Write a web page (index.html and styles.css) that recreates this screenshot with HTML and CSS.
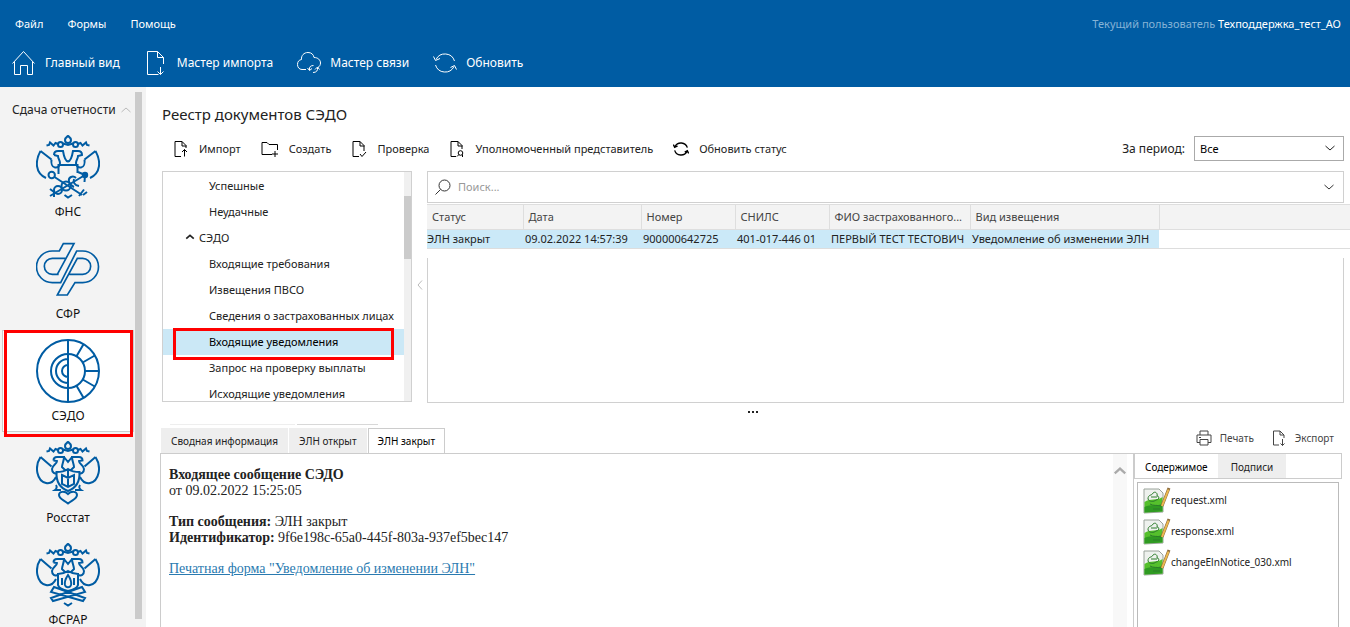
FILE: index.html
```html
<!DOCTYPE html>
<html lang="ru">
<head>
  <meta charset="UTF-8" />
  <meta name="viewport" content="width=device-width, initial-scale=1" />
  <title>Реестр документов СЭДО</title>
  <link rel="stylesheet" href="styles.css">
</head>
<body>
  <!-- Shared icon shapes -->
  <svg class="defs" width="0" height="0" aria-hidden="true">
    <symbol id="i-refresh" viewBox="0 0 24 24">
      <path d="M3 8.500A10 10 0 0 1 21.500 10M21 15.500A10 10 0 0 1 2.500 14M0.500 5.500L2.500 9.500L7 7.500M17.500 16.500L21.500 14.500L23.500 18.500" />
    </symbol>
    <symbol id="i-down" viewBox="0 0 12 12">
      <path d="M1.500 4L6 8L10.500 4" />
    </symbol>
    <symbol id="i-eagle" viewBox="0 0 64 64">
      <path d="M32 0.800C30.500 2 29 3 29 5A3 3 0 0 0 35 5C35 3 33.500 2 32 0.800Z" />
      <circle cx="24.500" cy="9.500" r="2.500" />
      <circle cx="39.500" cy="9.500" r="2.500" />
      <path d="M27 8.500L32 10L37 8.500M22 9L19.500 8L17.500 10.500L14 7.500L13 10L10.500 10.500M42 9L44.500 8L46.500 10.500L50 7.500L51 10L53.500 10.500" />
    </symbol>
    <symbol id="i-heads" viewBox="0 0 64 64">
      <path d="M4.500 16L15.500 25.500M4.500 16C-2 26 1 40 10 42C15 43 18 40 20 36M59.500 16L48.500 25.500M59.500 16C66 26 63 40 54 42C49 43 46 40 44 36" />
      <path d="M17.500 19.500C17.500 17 19 16 21 16H28C28 20 26 23 26 26L29 29H35L38 26C38 23 36 20 36 16H43C45 16 46.500 17 46.500 19.500L43 20C43 23 48 24 48 28C48 32 45 33 43 32M17.500 19.500L21 20C21 23 16 24 16 28C16 32 19 33 21 32M28 16L32 21L36 16" />
    </symbol>
    <symbol id="i-xml" viewBox="0 0 28 28">
      <path d="M1 3H16L20 7V26L1 27Z" fill="#eef1ee" stroke="#9aa39a" />
      <path d="M1.500 16C7 12 14 15 19.500 11V25.500L1.500 26.500Z" fill="#55c02c" />
      <path d="M1.500 21C8 18 14 20 19.500 18V25.500L1.500 26.500Z" fill="#2f9a22" />
      <path d="M5 13C5 8 9 10 10 7C12 5 15 7 14 10C17 10 16 14 13 14C11 16 6 16 5 13ZM8 11H14M7 18C10 20 15 19 18 20M10 23H17" fill="none" stroke="#2c7d2a" />
      <path d="M19 20L26 2" stroke="#8b6a3c" stroke-width="3" />
      <path d="M19 20L25.500 3.500" stroke="#edb94f" stroke-width="2" />
    </symbol>
  </svg>

  <header class="header">
    <div class="menu-row">
      <nav class="menu">
        <button type="button">Файл</button>
        <button type="button">Формы</button>
        <button type="button">Помощь</button>
      </nav>
      <div class="user"><span>Текущий пользователь</span> Техподдержка_тест_АО</div>
    </div>
    <div class="main-tools">
      <button type="button">
        <svg class="icon" viewBox="0 0 24 24"><path d="M0.500 12.500L11.500 0.500L22.500 12.500M2.500 10.500V23.500H8.500V14.500H15.500V23.500H20.500V10.500" /></svg>
        Главный вид
      </button>
      <button type="button">
        <svg class="icon" viewBox="0 0 24 24"><path d="M14.500 23.500H3.500V0.500H13.500L19.500 6.500V13M13.500 0.500V6.500H19.500M16.500 16V23.500M13.500 20.500L16.500 23.500L19.500 20.500" /></svg>
        Мастер импорта
      </button>
      <button type="button">
        <svg class="icon" viewBox="0 0 24 24"><path d="M9 18.500H5C2 18.500 0.500 16 0.500 13.500C0.500 10.500 2 9 4.500 8.500C4 4.500 7 1.500 11 1.500C14.500 1.500 16.500 3.500 17 6.500C21 6.500 23.500 9 23.500 12C23.500 14 22.500 15.500 21 16.500M12.500 19C12 16 13.500 14.500 16.500 14.500M10.500 17L12.500 19.500L15 17.500M20.500 16.500C21 19.500 19.500 21.500 16 21.500M18 18.500L20.500 16L22.500 18.500" /></svg>
        Мастер связи
      </button>
      <button type="button">
        <svg class="icon"><use href="#i-refresh" /></svg>
        Обновить
      </button>
    </div>
  </header>

  <div class="layout">
    <aside class="sidebar">
      <button type="button" class="group-title">
        Сдача отчетности
        <svg class="caret up" width="12" height="12"><use href="#i-down" /></svg>
      </button>
      <nav class="agencies">
        <a href="#fns">
          <svg class="emblem" viewBox="0 0 64 64">
            <use href="#i-eagle" />
            <path d="M4.500 16C-1 26 -1 38 10 43M4.500 16L15.500 24.500M59.500 16C65 26 65 38 54 43M59.500 16L48.500 24.500" />
            <path d="M18 20C18 17 19.500 16 22 16H27C28 22 29.500 26 32 26.500C34.500 26 36 22 37 16H42C44.500 16 46 17 46 20L42 21C42 24 40 25 40 28C40 31 42 33 45 32.500C48 32 49 28 48.500 24.500M18 20L22 21C22 24 24 25 24 28C24 31 22 33 19 32.500C16 32 15 28 15.500 24.500" />
            <path d="M22.500 39V30H41.500V38" />
            <circle cx="15.700" cy="40" r="3.200" />
            <path d="M18.500 42L46 60M43 61L48 54.500M47 60L51 57M14 61L49 40M18 62V57L14 54M42 37L49 40L48.500 47" />
            <circle cx="49" cy="40" r="2.200" fill="#005ca3" />
            <circle cx="22" cy="55" r="4" />
            <circle cx="30" cy="51" r="4.500" />
            <path d="M38 52C33 50 31 44 35 42C37 41 39 42 40 43M43 51C38 50 37 47 38 44M28.500 60L32 62.500L36 60" />
          </svg>
          ФНС
        </a>
        <a href="#sfr">
          <svg class="emblem" viewBox="108 438 192 192" stroke-width="5">
            <path d="M176 550H157A24 24 0 0 1 157 502H196M172 550L222 458H190L178 480H157A47.500 47.500 0 0 0 157 575H182L230 480H248A47.500 47.500 0 0 1 248 575H225L202 612H172L232 502H248A24 24 0 0 1 248 550H208" />
          </svg>
          СФР
        </a>
        <a href="#sedo" class="active">
          <svg class="emblem" viewBox="0 0 64 64">
            <circle cx="32" cy="32" r="31" />
            <circle cx="32" cy="32" r="17" />
            <path d="M32 1V63M32 20A12 12 0 0 0 32 44M32 26A6 6 0 0 0 32 38M49 32H63M40.500 17.300L47.500 5.200M46.700 23.500L58.800 16.500M46.700 40.500L58.800 47.500M40.500 46.700L47.500 58.800" />
          </svg>
          СЭДО
        </a>
        <a href="#rosstat">
          <svg class="emblem" viewBox="0 0 64 64">
            <use href="#i-eagle" />
            <use href="#i-heads" />
            <path d="M20.500 31C25 31 29 30 32 28C35 30 39 31 43.500 31C44 41 40 47 32 50C24 47 20 41 20.500 31Z" />
            <path d="M32 30V47M26 34L32 37L38 34V43L32 46L26 43ZM20 44C22 47 19 49 19 49L25 49M44 44C42 47 45 49 45 49L39 49M32 62.500C28 59 23 58 23 54C23 50 29 50 32 53C35 50 41 50 41 54C41 58 36 59 32 62.500Z" />
          </svg>
          Росстат
        </a>
        <a href="#fsrar">
          <svg class="emblem" viewBox="0 0 64 64">
            <use href="#i-eagle" />
            <use href="#i-heads" />
            <path d="M22 31C26 31 29 30 32 28C35 30 38 31 42 31V42C41 46 37 47 32 48C27 47 23 46 22 42Z" />
            <path d="M32 32C34 35 36 38 35 42C34 45 30 45 29 42C28 38 30 35 32 32ZM26 35V42M38 35V42M18 44L49 55L47 58L15 49ZM46 44L15 55L17 58L49 49ZM28 60L32 62.500L36 60" />
          </svg>
          ФСРАР
        </a>
      </nav>
      <div class="side-scroll"></div>
      <div class="mark mark-side"></div>
    </aside>

    <main class="content">
      <h1>Реестр документов СЭДО</h1>

      <div class="toolbar">
        <button type="button">
          <svg class="icon-s" viewBox="0 0 16 16"><path d="M8 15.500H2V0.500H9L13 4.500V7M9 0.500V5H13.500M11.500 15.500V8.500M9 11L11.500 8.500L14 11" /></svg>
          Импорт
        </button>
        <button type="button">
          <svg class="icon-s wide" viewBox="0 0 18 16"><path d="M11 13.500H1V1.500H6L8 3.500H16.500V9M14 10V16M11 13H17" /></svg>
          Создать
        </button>
        <button type="button">
          <svg class="icon-s" viewBox="0 0 16 16"><path d="M8 15.500H2V0.500H9L13 4.500V10M9 0.500V5H13.500M9 13L11 15.500L15 11" /></svg>
          Проверка
        </button>
        <button type="button">
          <svg class="icon-s" viewBox="0 0 16 16"><path d="M7 15.500H2V0.500H9L13 4.500V8M9 0.500V5H13.500M8 15.500L10 13.500" /><circle cx="11.500" cy="12" r="2.300" /><path d="M13.500 13.500V16" /></svg>
          Уполномоченный представитель
        </button>
        <button type="button">
          <svg class="icon-s bold"><use href="#i-refresh" /></svg>
          Обновить статус
        </button>
        <div class="period">
          <label for="period">За период:</label>
          <span class="select-wrap">
            <select id="period"><option>Все</option></select>
            <svg class="caret" width="12" height="12"><use href="#i-down" /></svg>
          </span>
        </div>
      </div>

      <div class="panels">
        <div class="tree">
          <ul>
            <li><button type="button">Успешные</button></li>
            <li><button type="button">Неудачные</button></li>
            <li class="parent">
              <button type="button"><svg class="caret up" width="10" height="10"><use href="#i-down" /></svg>СЭДО</button>
            </li>
            <li><button type="button">Входящие требования</button></li>
            <li><button type="button">Извещения ПВСО</button></li>
            <li><button type="button">Сведения о застрахованных лицах</button></li>
            <li class="selected"><button type="button">Входящие уведомления</button></li>
            <li><button type="button">Запрос на проверку выплаты</button></li>
            <li><button type="button">Исходящие уведомления</button></li>
          </ul>
          <div class="tree-scroll"><div class="thumb"></div></div>
          <div class="mark mark-tree"></div>
        </div>

        <button type="button" class="collapse" aria-label="Свернуть">
          <svg class="caret left" width="12" height="12"><use href="#i-down" /></svg>
        </button>

        <section class="grid">
          <div class="search">
            <svg class="icon-s" viewBox="0 0 16 16"><circle cx="9.500" cy="6.500" r="5.500" /><path d="M5.500 10.500L0.500 15.500" /></svg>
            <input type="text" placeholder="Поиск..." aria-label="Поиск">
            <svg class="caret" width="12" height="12"><use href="#i-down" /></svg>
          </div>
          <table>
            <colgroup>
              <col class="c-status"><col class="c-date"><col class="c-num"><col class="c-num"><col class="c-name"><col class="c-type"><col>
            </colgroup>
            <thead>
              <tr>
                <th>Статус</th>
                <th>Дата</th>
                <th>Номер</th>
                <th>СНИЛС</th>
                <th>ФИО застрахованного...</th>
                <th>Вид извещения</th>
                <th></th>
              </tr>
            </thead>
            <tbody>
              <tr>
                <td>ЭЛН закрыт</td>
                <td>09.02.2022 14:57:39</td>
                <td>900000642725</td>
                <td>401-017-446 01</td>
                <td>ПЕРВЫЙ ТЕСТ ТЕСТОВИЧ</td>
                <td>Уведомление об изменении ЭЛН</td>
                <td></td>
              </tr>
            </tbody>
          </table>
          <div class="grid-space"></div>
        </section>
      </div>

      <div class="splitter"><i></i><i></i><i></i></div>
      <div class="tab-edges"><i></i><i></i></div>

      <div class="detail-bar">
        <div class="tabs">
          <button type="button">Сводная информация</button>
          <button type="button">ЭЛН открыт</button>
          <button type="button" class="active">ЭЛН закрыт</button>
        </div>
        <div class="detail-actions">
          <button type="button">
            <svg class="icon-s" viewBox="0 0 16 16"><path d="M4 5V1H12V5M4 12.500H1V5H15V12.500H12M4 9.500H12V15H4ZM3 7.500H5" /></svg>
            Печать
          </button>
          <button type="button">
            <svg class="icon-s" viewBox="0 0 16 16"><path d="M8 15H2.500V1H9L13 5V8M9 1V5H13M11.500 9V15.500M9.500 13.500L11.500 15.500L13.500 13.500" /></svg>
            Экспорт
          </button>
        </div>
      </div>

      <div class="detail">
        <article class="message">
          <p><b>Входящее сообщение СЭДО</b><br>от 09.02.2022 15:25:05</p>
          <p><b>Тип сообщения:</b> ЭЛН закрыт<br><b>Идентификатор:</b> 9f6e198c-65a0-445f-803a-937ef5bec147</p>
          <p><a href="#print">Печатная форма "Уведомление об изменении ЭЛН"</a></p>
        </article>
        <div class="message-scroll"><svg class="caret up" width="14" height="14"><use href="#i-down" /></svg></div>
        <section class="files">
          <div class="file-tabs">
            <button type="button" class="active">Содержимое</button>
            <button type="button">Подписи</button>
          </div>
          <ul>
            <li><svg width="28" height="28"><use href="#i-xml" /></svg>request.xml</li>
            <li><svg width="28" height="28"><use href="#i-xml" /></svg>response.xml</li>
            <li><svg width="28" height="28"><use href="#i-xml" /></svg>changeElnNotice_030.xml</li>
          </ul>
        </section>
      </div>
    </main>
  </div>
</body>
</html>
```
FILE: styles.css
```css
* {
  box-sizing: border-box;
}
body {
  margin: 0;
  height: 100vh;
  overflow: hidden;
  display: flex;
  flex-direction: column;
  font-family: 'Noto Sans', 'Open Sans', sans-serif;
  font-size: 12px;
  line-height: 16px;
  color: #222;
  background: #fff;
}
button, input, select {
  font: inherit;
  color: inherit;
}
button {
  padding: 0;
  border: none;
  background: none;
  cursor: pointer;
  white-space: nowrap;
}
ul {
  list-style: none;
  margin: 0;
  padding: 0;
}
.defs {
  position: absolute;
}
.icon, .icon-s, .caret, .emblem {
  fill: none;
  stroke: currentColor;
  flex: none;
}
.icon {
  width: 24px;
  height: 24px;
}
.icon-s {
  width: 16px;
  height: 16px;
}
.icon-s.wide {
  width: 18px;
}
.icon-s.bold {
  stroke-width: 2;
}
.up {
  transform: rotate(180deg);
}
.left {
  transform: rotate(90deg);
}

/* Header */
.header {
  background: #005ca3;
  color: #fff;
  height: 87px;
  flex: none;
}
.menu-row {
  display: flex;
  justify-content: space-between;
  padding: 16px 9px 0 15px;
  font-size: 11px;
}
.menu {
  display: flex;
  gap: 24px;
}
.user {
  word-break: keep-all;
}
.user span {
  color: #85b3d6;
}
.main-tools {
  display: flex;
  gap: 24px;
  padding: 19px 12px 0;
}
.main-tools button {
  display: flex;
  align-items: center;
  gap: 9px;
}

/* Left column */
.layout {
  flex: 1;
  min-height: 0;
  display: flex;
}
.sidebar {
  position: relative;
  width: 146px;
  flex: none;
  background: #f3f3f3;
  overflow: hidden;
}
.group-title {
  display: flex;
  align-items: center;
  gap: 4px;
  height: 39px;
  padding: 6px 0 0 12px;
}
.group-title .caret {
  color: #bbb;
}
.agencies a {
  display: flex;
  flex-direction: column;
  align-items: center;
  gap: 5px;
  width: 132px;
  height: 102px;
  margin-left: 2px;
  padding-top: 8px;
  border: 1px solid transparent;
  color: #111;
  text-decoration: none;
}
.agencies .active {
  background: #fff;
  border-color: #ccc;
}
.emblem {
  width: 64px;
  height: 64px;
  stroke: #005ca3;
}
.emblem:not([stroke-width]) {
  stroke-width: 2;
}
.side-scroll {
  position: absolute;
  top: 5px;
  bottom: 8px;
  right: 4px;
  width: 7px;
  background: #cbcbcb;
}
.mark {
  position: absolute;
  border: 3px solid #f00;
  pointer-events: none;
}
.mark-side {
  left: 4px;
  top: 243px;
  width: 129px;
  height: 107px;
}

/* Registry */
.content {
  flex: 1;
  min-width: 0;
  padding: 16px 0 0 16px;
  display: flex;
  flex-direction: column;
}
h1 {
  margin: 0;
  font-size: 15px;
  line-height: 22px;
  font-weight: 400;
}
.toolbar {
  display: flex;
  align-items: center;
  gap: 20px;
  padding: 11px 6px 10px 11px;
  font-size: 11px;
}
.toolbar button {
  display: flex;
  align-items: center;
  gap: 10px;
}
.toolbar .icon-s {
  color: #000;
}
.period {
  display: flex;
  align-items: center;
  gap: 9px;
  margin-left: auto;
  font-size: 12px;
}
.select-wrap {
  position: relative;
}
.period select {
  display: block;
  appearance: none;
  width: 150px;
  height: 25px;
  padding: 0 5px;
  border: 1px solid #aaa;
  border-radius: 0;
  background: #fff;
  color: #000;
  font-size: 11px;
}
.select-wrap .caret {
  position: absolute;
  right: 8px;
  top: 6px;
  pointer-events: none;
}
.panels {
  display: flex;
  height: 232px;
  flex: none;
}
.tree {
  position: relative;
  display: flex;
  width: 250px;
  height: 231px;
  border: 1px solid #d0d0d0;
  overflow: hidden;
  font-size: 11px;
}
.tree ul {
  flex: 1;
  min-width: 0;
  padding-top: 1px;
}
.tree li {
  height: 26px;
  padding-left: 46px;
}
.tree li button {
  height: 26px;
}
.tree .parent {
  padding-left: 22px;
}
.tree .parent .caret {
  margin-right: 4px;
  stroke-width: 2;
}
.tree .selected {
  background: #cbe8f6;
  color: #000;
}
.tree-scroll {
  width: 7px;
  flex: none;
  padding-top: 24px;
  background: #f0f0f0;
}
.thumb {
  height: 63px;
  background: #cbcbcb;
}
.mark-tree {
  left: 10px;
  top: 156px;
  width: 221px;
  height: 32px;
}
.collapse {
  width: 15px;
  color: #bbb;
}
.grid {
  flex: 1;
  min-width: 0;
  display: flex;
  flex-direction: column;
}
.search {
  display: flex;
  align-items: center;
  gap: 7px;
  height: 32px;
  margin-right: 6px;
  padding: 0 8px 0 7px;
  border: 1px solid #d0d0d0;
  color: #333;
  font-size: 11px;
}
.search input {
  flex: 1;
  min-width: 0;
  padding: 0;
  border: none;
  outline: none;
  background: none;
}
.search input::placeholder {
  color: #999;
}
table {
  width: 100%;
  margin-top: 1px;
  table-layout: fixed;
  border-collapse: collapse;
  font-size: 11px;
}
.c-status {
  width: 96px;
}
.c-date {
  width: 118px;
}
.c-num {
  width: 94px;
}
.c-name {
  width: 141px;
}
.c-type {
  width: 189px;
}
th, td {
  padding: 0;
  text-align: left;
  white-space: nowrap;
  overflow: hidden;
}
th {
  height: 25px;
  padding-left: 5px;
  border: 1px solid #dedede;
  border-left: none;
  background: #f3f3f3;
  color: #444;
  font-weight: 400;
}
th:last-child {
  border-right: none;
}
td {
  height: 19px;
  padding-left: 2px;
  border-bottom: 1px solid #ddd;
  background: #cbe9f8;
}
td:first-child {
  padding-left: 0;
}
td:last-child {
  background: #fff;
}
.grid-space {
  flex: 1;
  margin: 9px 6px 0 0;
  border: 1px solid #d0d0d0;
  border-top: none;
}

/* Details */
.splitter {
  display: flex;
  justify-content: center;
  gap: 2px;
  height: 21px;
  padding: 8px 6px 0 0;
  flex: none;
}
.splitter i {
  width: 2px;
  height: 2px;
  background: #222;
}
.tab-edges {
  display: flex;
  gap: 2px;
  height: 4px;
  padding-left: 8px;
  flex: none;
}
.tab-edges i {
  width: 125px;
  height: 1px;
  background: #eee;
}
.tab-edges i + i {
  width: 81px;
  background: #d8d8d8;
}
.detail-bar {
  display: flex;
  justify-content: space-between;
  height: 25px;
  margin-left: -1px;
  flex: none;
  font-size: 10px;
}
.tabs {
  display: flex;
  gap: 1px;
}
.tabs button, .file-tabs button {
  padding: 0 9px;
  border: 1px solid #eee;
  border-bottom: none;
  background: #eee;
}
.tabs .active {
  border-color: #ccc;
  background: #fff;
  color: #000;
}
.detail-actions {
  display: flex;
  gap: 17px;
  padding: 0 16px 5px 0;
}
.detail-actions button {
  display: flex;
  align-items: center;
  gap: 8px;
  color: #444;
}
.detail {
  display: flex;
  flex: 1;
  min-height: 0;
  margin-left: -2px;
}
.message {
  flex: 1;
  padding: 13px 8px;
  border: 1px solid #ccc;
  border-width: 1px 0 0 1px;
  font-family: 'Liberation Serif', serif;
  font-size: 14px;
  line-height: 16px;
}
.message p {
  margin: 0 0 15px;
}
.message a {
  color: #2a7ab0;
}
.message-scroll {
  width: 20px;
  padding: 10px 0 0;
  border-top: 1px solid #ccc;
  background: linear-gradient(to right, #f8f8f8 14px, #fff 14px);
  color: #aaa;
}
.message-scroll .caret {
  stroke-width: 2;
}
.files {
  width: 209px;
  margin-right: 8px;
  display: flex;
  flex-direction: column;
  border-left: 1px solid #ccc;
  font-size: 10px;
}
.file-tabs {
  display: flex;
  height: 26px;
  margin-bottom: 3px;
  border: 1px solid #ccc;
}
.file-tabs button {
  padding: 0 12px;
}
.file-tabs .active {
  padding: 0 9px;
  border-color: #fff;
  background: #fff;
  color: #000;
}
.files ul {
  flex: 1;
  margin: 0 3px;
  padding: 1px 5px;
  border: 1px solid #bbb;
  border-bottom: none;
}
.files li {
  display: flex;
  align-items: center;
  height: 31px;
}
```
